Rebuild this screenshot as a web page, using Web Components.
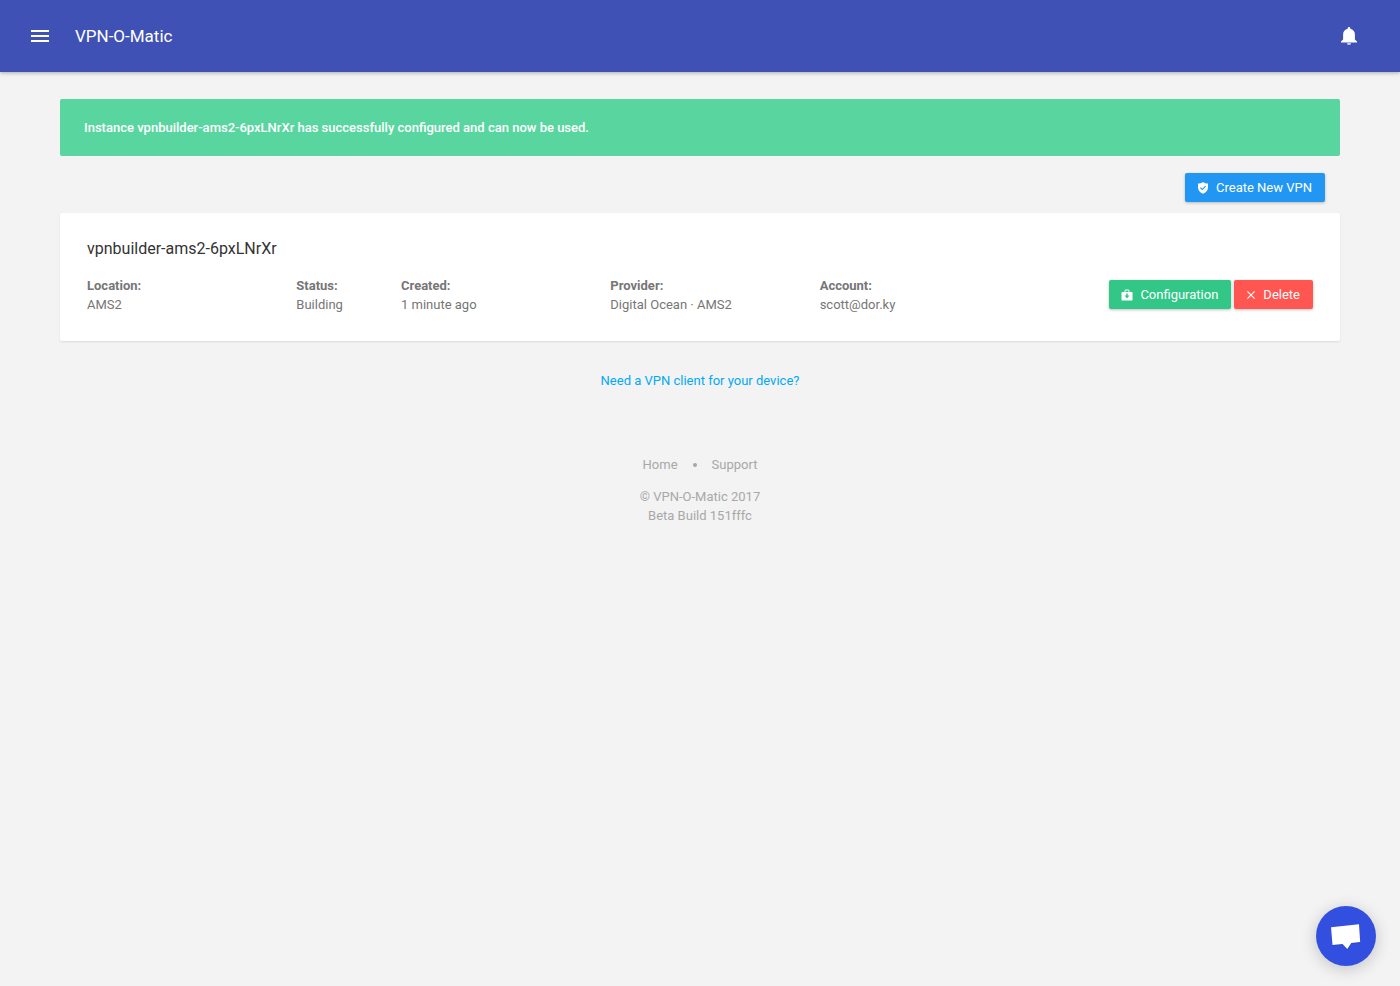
<!DOCTYPE html>
<html lang="en">
<head>
<meta charset="utf-8">
<meta name="viewport" content="width=device-width, initial-scale=1">
<title>VPN-O-Matic</title>
<style>
  body {
    margin: 0;
    background: #f3f3f3;
    color: #767676;
    font-family: Roboto, "Liberation Sans", sans-serif;
    font-size: 13px;
    line-height: 19px;
  }
  main { padding: 27px 60px 0; }
</style>
</head>
<body>
  <vpn-header>VPN-O-Matic</vpn-header>

  <main>
    <vpn-alert>Instance vpnbuilder-ams2-6pxLNrXr has successfully configured and can now be used.</vpn-alert>
    <vpn-toolbar>
      <vpn-button icon="shield" color="#2196f3">Create New VPN</vpn-button>
    </vpn-toolbar>
    <vpn-instance name="vpnbuilder-ams2-6pxLNrXr" location="AMS2" status="Building"
      created="1 minute ago" provider="Digital Ocean · AMS2" account="scott@dor.ky">
      <vpn-button icon="kit" color="#32c787">Configuration</vpn-button>
      <vpn-button icon="close" color="#ff5652">Delete</vpn-button>
    </vpn-instance>
    <vpn-client-link>Need a VPN client for your device?</vpn-client-link>
  </main>

  <vpn-footer>
    <span>© VPN-O-Matic 2017</span>
    <span>Beta Build 151fffc</span>
  </vpn-footer>
  <vpn-chat></vpn-chat>

<script>
(function() {
  // icons, 24 units high; the viewBox width follows the glyph
  const ICONS = {
    menu: [24, '<path d="M3 6h18v2H3zM3 11h18v2H3zM3 16h18v2H3z"/>'],
    bell: [24, '<path d="M14 19.200a2 1.600 0 0 1-4 0zM12 3a1.300 1.300 0 0 1 1.300 1.300v.5C16 5.300 17.900 7.500 17.900 10.300v5.200L20 17.600v.8H4v-.8l2.100-2.100v-5.200C6.100 7.500 8 5.300 10.700 4.800v-.5A1.300 1.300 0 0 1 12 3z"/>'],
    shield: [24, '<path fill-rule="evenodd" d="M12 0C9 2 5.500 3 2 3.200V11c0 5.500 4.200 10.200 10 12.500 5.800-2.300 10-7 10-12.500V3.200C18.500 3 15 2 12 0zM10.500 16.500 6 12l1.600-1.600 2.900 2.900 6-6L18 9z"/>'],
    kit: [24, '<path fill-rule="evenodd" d="M9 1h6l2 2v3h5a1 1 0 0 1 1 1v15a1 1 0 0 1-1 1H2a1 1 0 0 1-1-1V7a1 1 0 0 1 1-1h5V3zM9 3v3h6V3zM10.500 9v4H7l5 6 5-6h-3.500V9z"/>'],
    close: [20, '<path d="M18 5.500 16.500 4l-6.500 6.500L3.500 4 2 5.500 8.500 12 2 18.500 3.500 20l6.500-6.500 6.500 6.500 1.500-1.500-6.500-6.500z"/>']
  };

  function svg(name, size) {
    const [w, paths] = ICONS[name];
    return `<svg width="${size * w / 24}" height="${size}" viewBox="0 0 ${w} 24" fill="currentColor" aria-hidden="true">${paths}</svg>`;
  }

  class VpnHeader extends HTMLElement {
    constructor() {
      super();
      this.attachShadow({ mode: 'open' });
      this.shadowRoot.innerHTML = `
        <style>
          :host { display: block; }
          header {
            display: flex;
            align-items: center;
            box-sizing: border-box;
            height: 72px;
            padding: 0 39px 0 28px;
            background: #3f51b5;
            color: #fff;
            box-shadow: 0 1px 4px rgba(0, 0, 0, 0.3);
          }
          button {
            display: flex;
            padding: 0;
            border: 0;
            background: none;
            color: inherit;
            cursor: pointer;
          }
          a {
            flex: 1;
            margin-left: 23px;
            color: #fff;
            font-size: 17px;
            text-decoration: none;
          }
        </style>
        <header>
          <button type="button" aria-label="Menu">${svg('menu', 24)}</button>
          <a href="#"><slot></slot></a>
          <button type="button" aria-label="Notifications">${svg('bell', 24)}</button>
        </header>
      `;
    }
  }

  class VpnAlert extends HTMLElement {
    constructor() {
      super();
      this.attachShadow({ mode: 'open' });
      this.shadowRoot.innerHTML = `
        <style>
          :host {
            display: block;
            padding: 19px 24px;
            border-radius: 2px;
            background: #59d69f;
            color: #fff;
            font-weight: 500;
          }
        </style>
        <div role="alert"><slot></slot></div>
      `;
    }
  }

  class VpnToolbar extends HTMLElement {
    constructor() {
      super();
      this.attachShadow({ mode: 'open' });
      this.shadowRoot.innerHTML = `
        <style>
          :host {
            display: flex;
            justify-content: flex-end;
            padding: 17px 15px 11px;
          }
        </style>
        <slot></slot>
      `;
    }
  }

  class VpnButton extends HTMLElement {
    connectedCallback() {
      if (this.shadowRoot) return;
      this.attachShadow({ mode: 'open' });
      this.shadowRoot.innerHTML = `
        <style>
          :host { display: inline-block; }
          button {
            display: flex;
            align-items: center;
            gap: 7px;
            padding: 5px 13px 5px 12px;
            border: 0;
            border-radius: 2px;
            background: ${this.getAttribute('color')};
            color: #fff;
            font: inherit;
            white-space: nowrap;
            cursor: pointer;
            box-shadow: 0 1px 3px rgba(0, 0, 0, 0.25);
          }
          button:hover { opacity: 0.9; }
        </style>
        <button type="button">${svg(this.getAttribute('icon'), 12)}<span><slot></slot></span></button>
      `;
    }
  }

  class VpnInstance extends HTMLElement {
    connectedCallback() {
      if (this.shadowRoot) return;
      this.attachShadow({ mode: 'open' });
      const fields = ['Location', 'Status', 'Created', 'Provider', 'Account'];
      let html = '';
      fields.forEach(f => {
        html += `<div><dt>${f}:</dt><dd>${this.getAttribute(f.toLowerCase())}</dd></div>`;
      });
      this.shadowRoot.innerHTML = `
        <style>
          :host {
            display: block;
            padding: 26px 12px 27px;
            border-radius: 2px;
            background: #fff;
            box-shadow: 0 1px 2px rgba(0, 0, 0, 0.1);
          }
          h2 {
            margin: 0 15px 18px;
            color: #333;
            font-size: 16px;
            font-weight: 400;
            line-height: 19px;
          }
          .row {
            display: grid;
            grid-template-columns: 9fr 3fr;
          }
          dl {
            display: grid;
            grid-template-columns: 2fr 1fr 2fr 2fr 2fr;
            margin: 0;
          }
          dl div {
            min-width: 0;
            padding-left: 15px;
            white-space: nowrap;
          }
          dt { font-weight: 700; }
          dd { margin: 0; }
          .actions {
            display: flex;
            align-items: flex-start;
            justify-content: flex-end;
            gap: 3px;
            padding: 4px 15px 0;
          }
        </style>
        <h2>${this.getAttribute('name')}</h2>
        <div class="row">
          <dl>${html}</dl>
          <div class="actions"><slot></slot></div>
        </div>
      `;
    }
  }

  class VpnClientLink extends HTMLElement {
    constructor() {
      super();
      this.attachShadow({ mode: 'open' });
      this.shadowRoot.innerHTML = `
        <style>
          :host {
            display: block;
            margin-top: 30px;
            text-align: center;
          }
          a { color: #03a9f4; text-decoration: none; }
        </style>
        <a href="#"><slot></slot></a>
      `;
    }
  }

  class VpnFooter extends HTMLElement {
    constructor() {
      super();
      this.attachShadow({ mode: 'open' });
      this.shadowRoot.innerHTML = `
        <style>
          :host {
            display: block;
            padding: 65px 15px 30px;
            color: #a8a8a8;
            text-align: center;
          }
          nav {
            display: flex;
            align-items: center;
            justify-content: center;
            gap: 15px;
            margin-bottom: 13px;
          }
          nav i {
            width: 4px;
            height: 4px;
            border-radius: 50%;
            background: #a8a8a8;
          }
          a { color: inherit; text-decoration: none; }
          ::slotted(span) { display: block; }
        </style>
        <footer>
          <nav><a href="#">Home</a><i></i><a href="#">Support</a></nav>
          <slot></slot>
        </footer>
      `;
    }
  }

  class VpnChat extends HTMLElement {
    constructor() {
      super();
      this.attachShadow({ mode: 'open' });
      this.shadowRoot.innerHTML = `
        <style>
          :host {
            position: fixed;
            right: 24px;
            bottom: 20px;
          }
          button {
            display: block;
            width: 60px;
            height: 60px;
            padding: 0;
            border: 0;
            border-radius: 50%;
            background: #334fe0;
            cursor: pointer;
            box-shadow: 0 3px 16px rgba(0, 0, 0, 0.2);
          }
          svg { display: block; }
        </style>
        <button type="button" aria-label="Open chat">
          <svg width="60" height="60" viewBox="0 0 60 60" aria-hidden="true">
            <path fill="#2b41b8" opacity=".6" d="M15 22l28-2.500 1.500 17.500-9 1-3.500 6-5-5-10 1z"/>
            <path fill="#fff" d="M15 21.300 43 18.300 44.200 36 35.300 37 31.300 43 26.500 38 16.500 39z"/>
          </svg>
        </button>
      `;
    }
  }

  customElements.define('vpn-header', VpnHeader);
  customElements.define('vpn-alert', VpnAlert);
  customElements.define('vpn-toolbar', VpnToolbar);
  customElements.define('vpn-button', VpnButton);
  customElements.define('vpn-instance', VpnInstance);
  customElements.define('vpn-client-link', VpnClientLink);
  customElements.define('vpn-footer', VpnFooter);
  customElements.define('vpn-chat', VpnChat);
})();
</script>
</body>
</html>
